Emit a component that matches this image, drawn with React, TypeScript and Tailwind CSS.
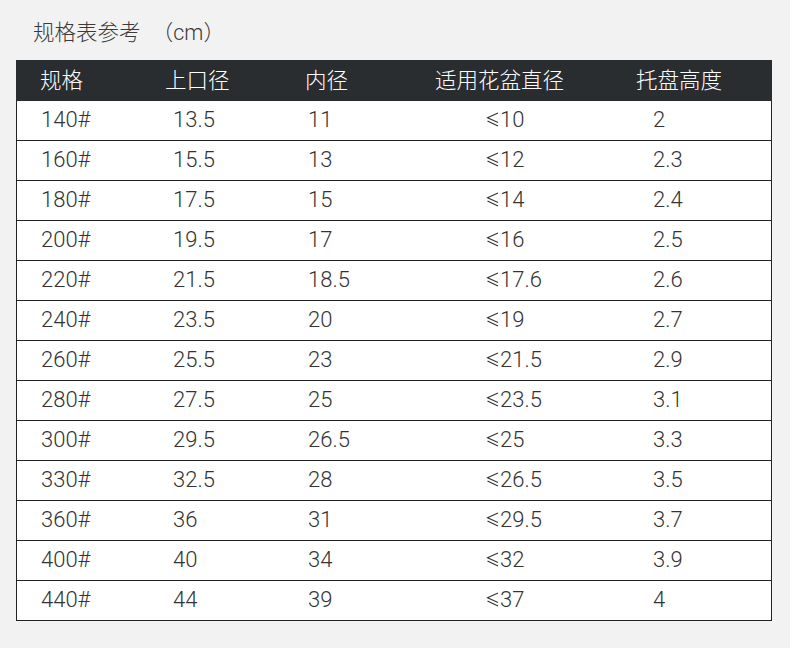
const font = {
  fontFamily: "Roboto, 'Noto Sans CJK SC', 'DejaVu Sans', sans-serif",
};

type Row = [string, string, string, string, string];

const rows: Row[] = [
  ["140#", "13.5", "11", "10", "2"],
  ["160#", "15.5", "13", "12", "2.3"],
  ["180#", "17.5", "15", "14", "2.4"],
  ["200#", "19.5", "17", "16", "2.5"],
  ["220#", "21.5", "18.5", "17.6", "2.6"],
  ["240#", "23.5", "20", "19", "2.7"],
  ["260#", "25.5", "23", "21.5", "2.9"],
  ["280#", "27.5", "25", "23.5", "3.1"],
  ["300#", "29.5", "26.5", "25", "3.3"],
  ["330#", "32.5", "28", "26.5", "3.5"],
  ["360#", "36", "31", "29.5", "3.7"],
  ["400#", "40", "34", "32", "3.9"],
  ["440#", "44", "39", "37", "4"],
];

// slanted "less than or equal" like the source font draws it
const Le = () => (
  <svg width="13" height="15" viewBox="0 0 13 15" className="mr-[1px] inline-block">
    <path d="M12 1 L1.5 5.8 L12 10.6" fill="none" stroke="#333" strokeWidth="1.1" />
    <path d="M1.5 9 L12 14" fill="none" stroke="#333" strokeWidth="1.1" />
  </svg>
);

export default function App() {
  return (
    <div className="min-h-[648px] w-[790px] bg-[#f2f2f2] pt-[18px]" style={font}>
      <div className="h-[30px] pl-[33px] text-[21.5px] leading-[30px] font-light text-[#3a3a3a]">
        规格表参考 <span className="ml-[6px]">（cm）</span>
      </div>
      <div className="ml-[16px] mt-[12px] w-[756px]">
        <div className="flex h-[41px] items-center bg-[#2a2d30] pt-[2px] text-[21.5px] font-light text-white">
          <div className="w-[149px] pl-[24px]">规格</div>
          <div className="w-[140px]">上口径</div>
          <div className="w-[130px]">内径</div>
          <div className="w-[201px]">适用花盆直径</div>
          <div className="flex-1">托盘高度</div>
        </div>
        <div className="border-x border-[#222] bg-white">
          {rows.map((r) => (
            <div
              key={r[0]}
              className="flex h-[40px] items-center border-b border-[#222] pb-[2px] text-[22px] font-light text-[#333]"
            >
              <div className="w-[149px] pl-[24px]">{r[0]}</div>
              <div className="w-[140px] pl-[7px]">{r[1]}</div>
              <div className="w-[130px] pl-[2px]">{r[2]}</div>
              <div className="flex w-[201px] items-center pl-[50px]">
                <Le />
                {r[3]}
              </div>
              <div className="flex-1 pl-[16px]">{r[4]}</div>
            </div>
          ))}
        </div>
      </div>
    </div>
  );
}
